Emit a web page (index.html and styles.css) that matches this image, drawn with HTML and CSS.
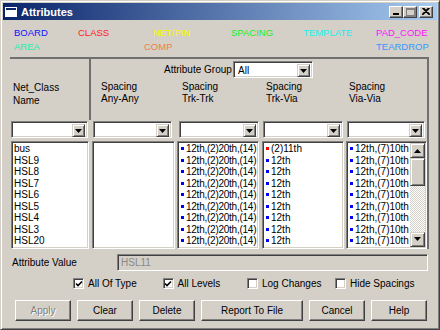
FILE: index.html
```html
<!DOCTYPE html>
<html>
<head>
<meta charset="utf-8">
<title>Attributes</title>
<link rel="stylesheet" href="styles.css">
</head>
<body>
<div class="window">
  <div class="titlebar">
    <svg class="app-icon" width="12" height="10" viewBox="0 0 12 10"><rect x="0.5" y="0.5" width="11" height="9" fill="#fff" stroke="#fff"/><rect x="1" y="1" width="10" height="2" fill="#0a246a"/></svg>
    <span class="title">Attributes</span>
    <div class="tb-buttons">
      <span class="tb-btn"><svg width="8" height="7" viewBox="0 0 8 7"><rect x="1" y="5" width="6" height="2" fill="#000"/></svg></span>
      <span class="tb-btn"><svg width="9" height="8" viewBox="0 0 9 8"><rect x="0.5" y="0.5" width="8" height="7" fill="none" stroke="#808080"/><rect x="0" y="0" width="9" height="2" fill="#808080"/></svg></span>
      <span class="tb-btn close"><svg width="8" height="7" viewBox="0 0 8 7"><path d="M0.5 0 L7.5 7 M7.5 0 L0.5 7 M1.5 0 L8 6.5 M6.5 0 L0 6.5" stroke="#000" stroke-width="1.2"/></svg></span>
    </div>
  </div>
  <div class="client">
    <div class="legend">
      <span class="c-board">BOARD</span>
      <span class="c-class">CLASS</span>
      <span class="c-netpin">NET/PIN</span>
      <span class="c-spacing">SPACING</span>
      <span class="c-template">TEMPLATE</span>
      <span class="c-padcode">PAD_CODE</span>
      <span class="c-area">AREA</span>
      <span class="c-comp">COMP</span>
      <span></span><span></span><span></span>
      <span class="c-teardrop">TEARDROP</span>
    </div>

    <div class="panel">
      <div class="head">
        <div class="head-left">Net_Class<br>Name</div>
        <div class="head-right">
          <div class="group-row">
            <span class="group-label">Attribute Group</span>
            <div class="combo group-combo"><span class="combo-text">All</span><span class="combo-btn"><svg width="7" height="4" viewBox="0 0 7 4"><polygon points="0,0 7,0 3.5,4" fill="#000"/></svg></span></div>
          </div>
          <div class="col-heads">
            <div>Spacing<br>Any-Any</div>
            <div>Spacing<br>Trk-Trk</div>
            <div>Spacing<br>Trk-Via</div>
            <div>Spacing<br>Via-Via</div>
          </div>
        </div>
      </div>

      <div class="filters">
        <div class="combo f1"><span class="combo-text"></span><span class="combo-btn"><svg width="7" height="4" viewBox="0 0 7 4"><polygon points="0,0 7,0 3.5,4" fill="#000"/></svg></span></div>
        <div class="combo f2"><span class="combo-text"></span><span class="combo-btn"><svg width="7" height="4" viewBox="0 0 7 4"><polygon points="0,0 7,0 3.5,4" fill="#000"/></svg></span></div>
        <div class="combo f3"><span class="combo-text"></span><span class="combo-btn"><svg width="7" height="4" viewBox="0 0 7 4"><polygon points="0,0 7,0 3.5,4" fill="#000"/></svg></span></div>
        <div class="combo f4"><span class="combo-text"></span><span class="combo-btn"><svg width="7" height="4" viewBox="0 0 7 4"><polygon points="0,0 7,0 3.5,4" fill="#000"/></svg></span></div>
        <div class="combo f5"><span class="combo-text"></span><span class="combo-btn"><svg width="7" height="4" viewBox="0 0 7 4"><polygon points="0,0 7,0 3.5,4" fill="#000"/></svg></span></div>
      </div>

      <div class="lists">
        <div class="list l1">
          <div class="items">
            <div class="row">bus</div>
            <div class="row">HSL9</div>
            <div class="row">HSL8</div>
            <div class="row">HSL7</div>
            <div class="row">HSL6</div>
            <div class="row">HSL5</div>
            <div class="row">HSL4</div>
            <div class="row">HSL3</div>
            <div class="row">HSL20</div>
          </div>
        </div>
        <div class="list l2"><div class="items"></div></div>
        <div class="list l3">
          <div class="items">
            <div class="row"><i class="mk"></i>12th,(2)20th,(14)</div>
            <div class="row"><i class="mk"></i>12th,(2)20th,(14)</div>
            <div class="row"><i class="mk"></i>12th,(2)20th,(14)</div>
            <div class="row"><i class="mk"></i>12th,(2)20th,(14)</div>
            <div class="row"><i class="mk"></i>12th,(2)20th,(14)</div>
            <div class="row"><i class="mk"></i>12th,(2)20th,(14)</div>
            <div class="row"><i class="mk"></i>12th,(2)20th,(14)</div>
            <div class="row"><i class="mk"></i>12th,(2)20th,(14)</div>
            <div class="row"><i class="mk"></i>12th,(2)20th,(14)</div>
          </div>
        </div>
        <div class="list l4">
          <div class="items">
            <div class="row"><i class="mk red"></i>(2)11th</div>
            <div class="row"><i class="mk"></i>12th</div>
            <div class="row"><i class="mk"></i>12th</div>
            <div class="row"><i class="mk"></i>12th</div>
            <div class="row"><i class="mk"></i>12th</div>
            <div class="row"><i class="mk"></i>12th</div>
            <div class="row"><i class="mk"></i>12th</div>
            <div class="row"><i class="mk"></i>12th</div>
            <div class="row"><i class="mk"></i>12th</div>
          </div>
        </div>
        <div class="list l5">
          <div class="items">
            <div class="row"><i class="mk"></i>12th,(7)10th</div>
            <div class="row"><i class="mk"></i>12th,(7)10th</div>
            <div class="row"><i class="mk"></i>12th,(7)10th</div>
            <div class="row"><i class="mk"></i>12th,(7)10th</div>
            <div class="row"><i class="mk"></i>12th,(7)10th</div>
            <div class="row"><i class="mk"></i>12th,(7)10th</div>
            <div class="row"><i class="mk"></i>12th,(7)10th</div>
            <div class="row"><i class="mk"></i>12th,(7)10th</div>
            <div class="row"><i class="mk"></i>12th,(7)10th</div>
          </div>
          <div class="scrollbar">
            <span class="sb-btn"><svg width="7" height="4" viewBox="0 0 7 4"><polygon points="3.5,0 7,4 0,4" fill="#000"/></svg></span>
            <span class="sb-thumb"></span>
            <span class="sb-track"></span>
            <span class="sb-btn"><svg width="7" height="4" viewBox="0 0 7 4"><polygon points="0,0 7,0 3.5,4" fill="#000"/></svg></span>
          </div>
        </div>
      </div>
    </div>

    <div class="attr-row">
      <span class="attr-label">Attribute Value</span>
      <div class="attr-field">HSL11</div>
    </div>

    <div class="checks">
      <label class="chk k1"><span class="box"><svg width="8" height="8" viewBox="0 0 8 8"><path d="M1 3.5 L3 5.5 L7 1.5" fill="none" stroke="#000" stroke-width="1.6"/></svg></span>All Of Type</label>
      <label class="chk k2"><span class="box"><svg width="8" height="8" viewBox="0 0 8 8"><path d="M1 3.5 L3 5.5 L7 1.5" fill="none" stroke="#000" stroke-width="1.6"/></svg></span>All Levels</label>
      <label class="chk k3"><span class="box"></span>Log Changes</label>
      <label class="chk k4"><span class="box"></span>Hide Spacings</label>
    </div>

    <div class="buttons">
      <span class="btn disabled">Apply</span>
      <span class="btn">Clear</span>
      <span class="btn">Delete</span>
      <span class="btn wide">Report To File</span>
      <span class="btn">Cancel</span>
      <span class="btn">Help</span>
    </div>
  </div>
</div>
</body>
</html>
```

FILE: styles.css
```css
* { box-sizing: border-box; }
html, body { margin: 0; padding: 0; }
body {
  width: 440px;
  height: 330px;
  overflow: hidden;
  background: #d4d0c8;
  font-family: "Liberation Sans", Arial, sans-serif;
  font-size: 10px;
  color: #000;
}
.window {
  width: 440px;
  height: 330px;
  border: 1px solid;
  border-color: #d4d0c8 #404040 #404040 #d4d0c8;
  box-shadow: inset 1px 1px #fff, inset -1px -1px #808080;
  padding: 2px;
  display: flex;
  flex-direction: column;
}
.titlebar {
  height: 17px;
  flex: none;
  background: linear-gradient(90deg, #0a246a, #a6caf0);
  display: flex;
  align-items: center;
  padding: 0 4px 0 2px;
}
.app-icon { flex: none; margin-right: 4px; }
.title {
  flex: 1;
  color: #fff;
  font-weight: bold;
  font-size: 11px;
}
.tb-buttons { display: flex; }
.tb-btn {
  width: 14px;
  height: 12px;
  background: #d4d0c8;
  border: 1px solid;
  border-color: #fff #404040 #404040 #fff;
  box-shadow: inset -1px -1px #808080;
  display: flex;
  align-items: center;
  justify-content: center;
}
.tb-btn.close { margin-left: 2px; }

.client { flex: 1; display: flex; flex-direction: column; }

.legend {
  margin: 6px 0 0 11px;
  display: grid;
  grid-template-columns: 64px 75px 78px 72px 73px 1fr;
  grid-auto-rows: 13.5px;
  line-height: 13.5px;
  font-size: 9.5px;
}
.c-board { color: #1010ff; }
.c-class { color: #ff2020; }
.c-netpin { color: #f8f800; }
.c-spacing { color: #22ee22; }
.c-template { color: #22eeee; }
.c-padcode { color: #ff10ff; }
.c-area { color: #22eeaa; }
.c-comp { color: #f08040; padding-left: 66px; }
.c-teardrop { color: #3399ff; }

.panel {
  margin: 4px 0 0 7px;
  width: 419px;
  border-top: 2px solid #707070;
  border-right: 2px solid #707070;
}
.head { display: flex; height: 61px; }
.head-left {
  width: 81px;
  border-right: 2px solid #707070;
  padding: 22px 0 0 3px;
  line-height: 13.4px;
}
.head-right { flex: 1; }
.group-row {
  margin-top: 2px;
  height: 17px;
  display: flex;
  align-items: center;
  padding-left: 73px;
}
.group-label { width: 69px; }
.group-combo { width: 80px; }
.col-heads {
  margin-top: 3px;
  padding-left: 10px;
  display: grid;
  grid-template-columns: 81px 84px 83px 1fr;
  line-height: 12px;
}

.combo {
  height: 17px;
  background: #fff;
  border: 1px solid;
  border-color: #808080 #fff #fff #808080;
  box-shadow: inset 1px 1px #404040, inset -1px -1px #d4d0c8;
  padding: 2px;
  display: flex;
}
.combo-text { flex: 1; padding-left: 2px; line-height: 13px; }
.combo-btn {
  width: 13px;
  height: 13px;
  background: #d4d0c8;
  border: 1px solid;
  border-color: #d4d0c8 #404040 #404040 #d4d0c8;
  box-shadow: inset 1px 1px #fff, inset -1px -1px #808080;
  display: flex;
  align-items: center;
  justify-content: center;
}
.filters { margin-top: 1px; display: flex; }
.f1 { margin-left: 1px; width: 77px; }
.f2 { margin-left: 5px; width: 79px; }
.f3 { margin-left: 7px; width: 80px; }
.f4 { margin-left: 4px; width: 80px; }
.f5 { margin-left: 4px; width: 78px; }

.lists { margin-top: 3px; display: flex; }
.list {
  height: 107.5px;
  background: #fff;
  border: 1px solid;
  border-color: #808080 #fff #fff #808080;
  box-shadow: inset 1px 1px #404040, inset -1px -1px #d4d0c8;
  padding: 1px;
  display: flex;
  overflow: hidden;
}
.l1 { margin-left: 1px; width: 78px; }
.l2 { margin-left: 3px; width: 83px; }
.l3 { margin-left: 2px; width: 82px; }
.l4 { margin-left: 3px; width: 82px; }
.l5 { margin-left: 2px; width: 81px; }
.items { flex: 1; min-width: 0; overflow: hidden; }
.row {
  height: 11.5px;
  line-height: 11.5px;
  white-space: nowrap;
  overflow: hidden;
  padding-left: 1px;
}
.l3 .row, .l4 .row, .l5 .row { padding-left: 2px; }
.l3 .row { letter-spacing: -0.25px; }
.mk {
  display: inline-block;
  width: 3px;
  height: 3px;
  background: #0000ff;
  margin-right: 2px;
  vertical-align: 2px;
}
.mk.red { background: #ff0000; }

.scrollbar {
  width: 15px;
  flex: none;
  display: flex;
  flex-direction: column;
}
.sb-btn, .sb-thumb {
  height: 15px;
  background: #d4d0c8;
  border: 1px solid;
  border-color: #d4d0c8 #404040 #404040 #d4d0c8;
  box-shadow: inset 1px 1px #fff, inset -1px -1px #808080;
  display: flex;
  align-items: center;
  justify-content: center;
}
.sb-thumb { height: 28px; }
.sb-track {
  flex: 1;
  background: repeating-conic-gradient(#fff 0 25%, #d4d0c8 0 50%) 0 0 / 2px 2px;
}

.attr-row {
  margin-top: 5.5px;
  height: 17px;
  display: flex;
  align-items: center;
}
.attr-label { width: 114px; padding-left: 9px; }
.attr-field {
  width: 311px;
  height: 17px;
  border: 1px solid;
  border-color: #808080 #fff #fff #808080;
  box-shadow: inset 1px 1px #404040, inset -1px -1px #d4d0c8;
  color: #8a8a8a;
  padding-left: 3px;
  line-height: 15px;
}

.checks {
  margin: 7px 0 0 70px;
  height: 11px;
  display: flex;
  align-items: center;
}
.chk { display: flex; align-items: center; gap: 4px; }
.k1 { width: 89.5px; }
.k2 { width: 84.5px; }
.k3 { width: 88px; }
.box {
  width: 11px;
  height: 11px;
  background: #fff;
  border: 1px solid;
  border-color: #808080 #fff #fff #808080;
  box-shadow: inset 1px 1px #404040, inset -1px -1px #d4d0c8;
  display: flex;
  align-items: center;
  justify-content: center;
}

.buttons {
  margin: 11px 0 0 12px;
  display: flex;
  gap: 6px;
}
.btn {
  width: 56px;
  height: 21px;
  background: #d4d0c8;
  border: 1px solid;
  border-color: #fff #404040 #404040 #fff;
  box-shadow: inset -1px -1px #808080, inset 1px 1px #d4d0c8;
  display: flex;
  align-items: center;
  justify-content: center;
}
.btn.wide { width: 102px; }
.btn.disabled { color: #808080; text-shadow: 1px 1px #fff; }
```
